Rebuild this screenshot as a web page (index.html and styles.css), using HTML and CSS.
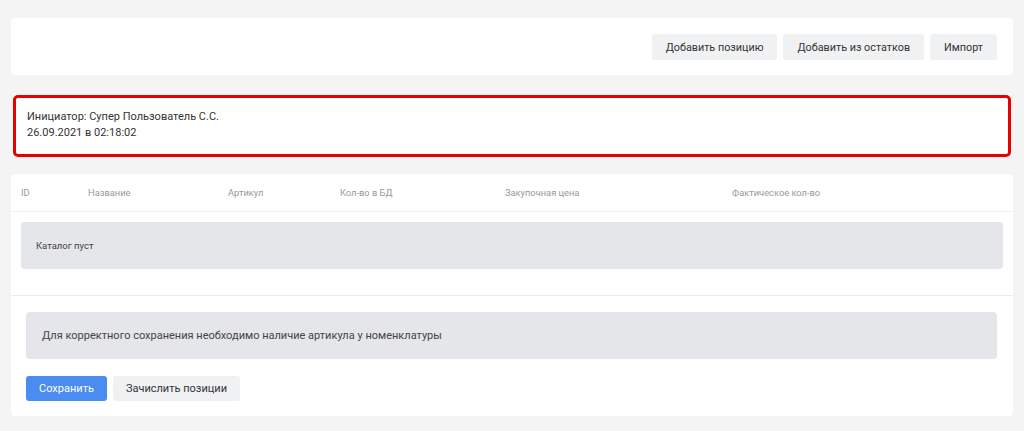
FILE: index.html
```html
<!DOCTYPE html>
<html lang="ru">
<head>
    <meta charset="UTF-8">
    <title>Инвентаризация</title>
    <link rel="stylesheet" href="styles.css">
</head>
<body>
    <div class="page">
        <div class="card toolbar">
            <button class="btn">Добавить позицию</button>
            <button class="btn">Добавить из остатков</button>
            <button class="btn">Импорт</button>
        </div>

        <div class="card info">
            <div>Инициатор: Супер Пользователь С.С.</div>
            <div>26.09.2021 в 02:18:02</div>
        </div>

        <div class="card list">
            <div class="list-head">
                <span>ID</span>
                <span>Название</span>
                <span>Артикул</span>
                <span>Кол-во в БД</span>
                <span>Закупочная цена</span>
                <span>Фактическое кол-во</span>
            </div>
            <div class="list-body">
                <div class="empty">Каталог пуст</div>
            </div>
            <div class="list-foot">
                <div class="notice">Для корректного сохранения необходимо наличие артикула у номенклатуры</div>
                <div class="actions">
                    <button class="btn btn-primary">Сохранить</button>
                    <button class="btn">Зачислить позиции</button>
                </div>
            </div>
        </div>
    </div>
</body>
</html>
```

FILE: styles.css
```css
body {
    margin: 0;
    background-color: #f4f4f4;
    font-family: Roboto, 'Noto Sans', sans-serif;
    color: #333;
    font-size: 12px;
}
.page {
    padding: 18px 11px 15px;
    display: flex;
    flex-direction: column;
}
.card {
    background-color: #fff;
    border-radius: 4px;
}
.toolbar {
    display: flex;
    justify-content: flex-end;
    gap: 6px;
    padding: 16px 16px 15px;
}
.btn {
    font-family: inherit;
    font-size: 10.8px;
    color: #333;
    background-color: #f0f1f3;
    border: none;
    border-radius: 3px;
    height: 26px;
    padding: 0 14px;
    cursor: pointer;
}
.btn-primary {
    background-color: #4a8cf0;
    color: #fff;
}
.info {
    margin: 20px 2px 0;
    border: 3px solid #e60000;
    border-radius: 5px;
    padding: 11px 11px 13px;
    line-height: 16px;
    font-size: 11px;
}
.list {
    margin-top: 17px;
}
.list-head {
    display: grid;
    grid-template-columns: 67px 140px 112px 165px 227px 1fr;
    padding: 0 10px;
    height: 37px;
    align-items: center;
    border-bottom: 1px solid #f0f0f0;
    font-size: 9.3px;
    color: #999;
}
.list-body {
    padding: 10px 10px 26px;
    border-bottom: 1px solid #ebebeb;
}
.empty {
    background-color: #e5e6e9;
    border-radius: 4px;
    height: 47px;
    display: flex;
    align-items: center;
    padding-left: 15px;
    font-size: 9.5px;
    color: #444;
}
.list-foot {
    padding: 16px 16px 15px 15px;
}
.notice {
    background-color: #e5e6ea;
    border-radius: 4px;
    height: 47px;
    display: flex;
    align-items: center;
    padding-left: 16px;
    font-size: 11px;
    color: #444;
}
.actions {
    display: flex;
    gap: 6px;
    margin-top: 17px;
}
.actions .btn {
    height: 25px;
    font-size: 11px;
    padding: 0 13px;
}
```
